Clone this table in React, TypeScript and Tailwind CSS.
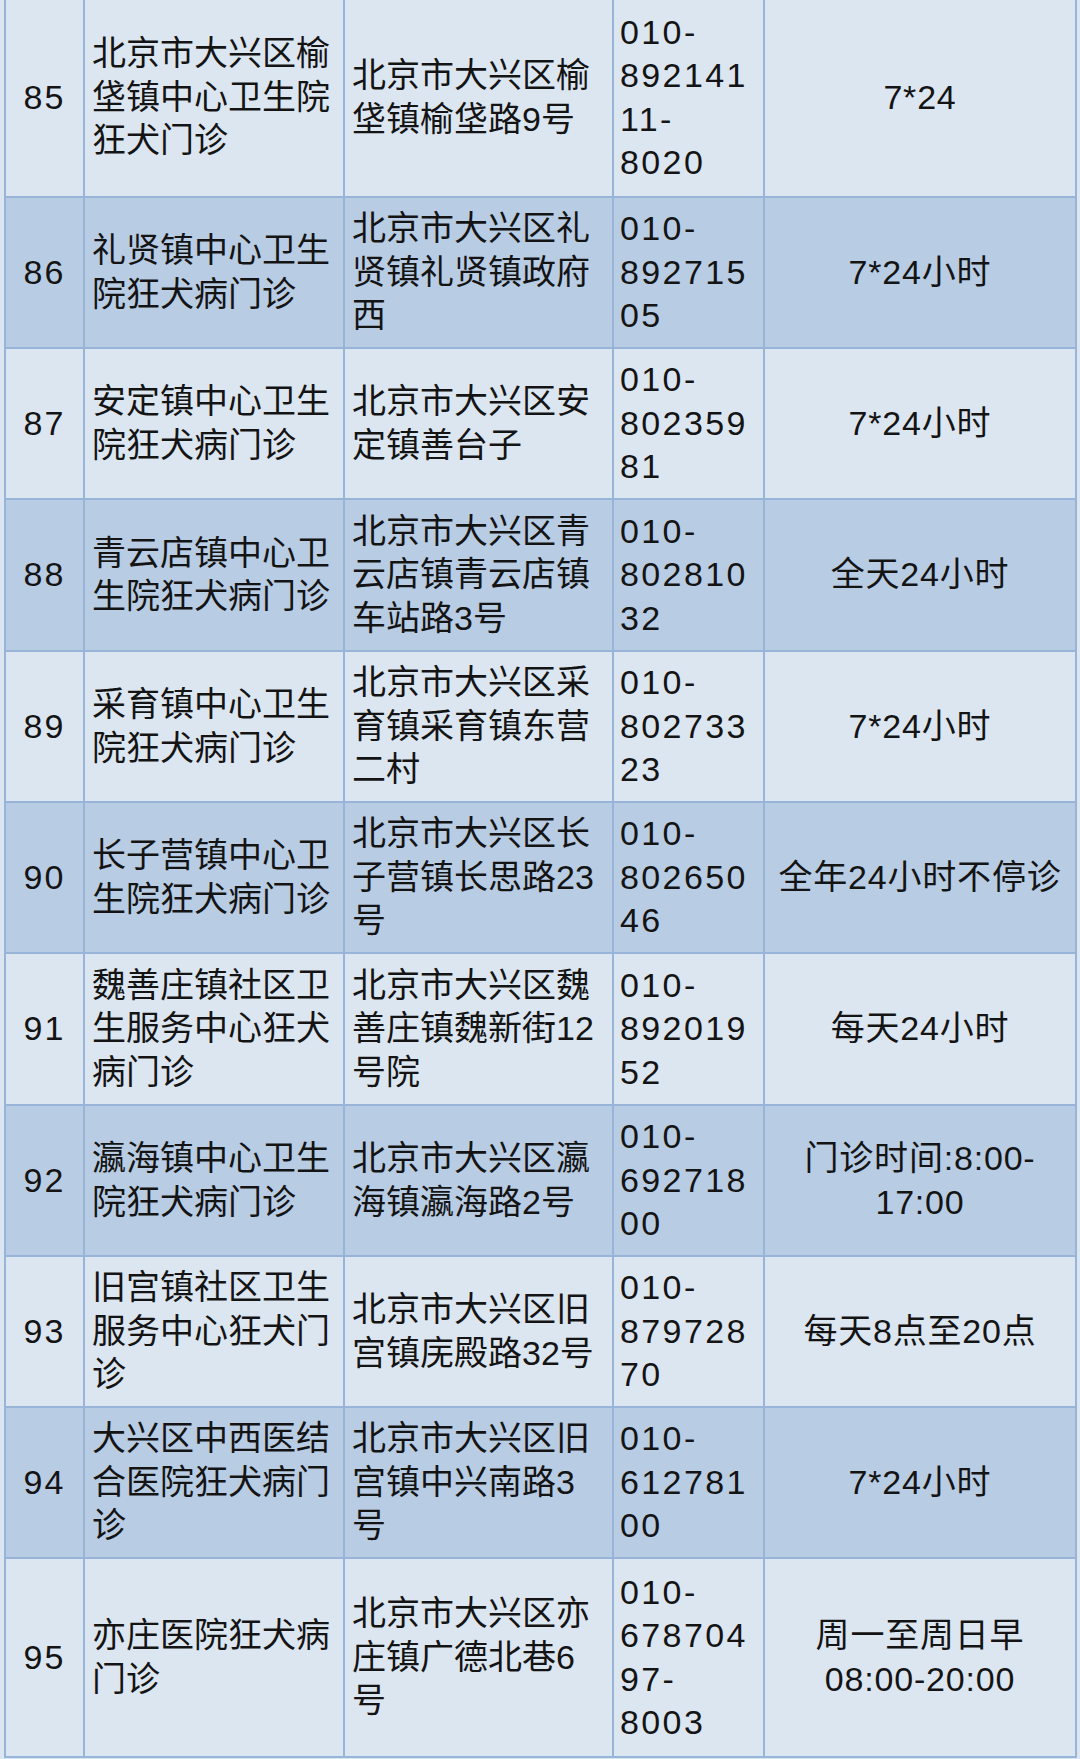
import React from 'react';

type Row = {
  no: string;
  name: string[];
  address: string[];
  phone: string[];
  hours: string[];
};

const rows: Row[] = [
  {
    no: '85',
    name: ['北京市大兴区榆', '垡镇中心卫生院', '狂犬门诊'],
    address: ['北京市大兴区榆', '垡镇榆垡路9号'],
    phone: ['010-', '892141', '11-', '8020'],
    hours: ['7*24'],
  },
  {
    no: '86',
    name: ['礼贤镇中心卫生', '院狂犬病门诊'],
    address: ['北京市大兴区礼', '贤镇礼贤镇政府', '西'],
    phone: ['010-', '892715', '05'],
    hours: ['7*24小时'],
  },
  {
    no: '87',
    name: ['安定镇中心卫生', '院狂犬病门诊'],
    address: ['北京市大兴区安', '定镇善台子'],
    phone: ['010-', '802359', '81'],
    hours: ['7*24小时'],
  },
  {
    no: '88',
    name: ['青云店镇中心卫', '生院狂犬病门诊'],
    address: ['北京市大兴区青', '云店镇青云店镇', '车站路3号'],
    phone: ['010-', '802810', '32'],
    hours: ['全天24小时'],
  },
  {
    no: '89',
    name: ['采育镇中心卫生', '院狂犬病门诊'],
    address: ['北京市大兴区采', '育镇采育镇东营', '二村'],
    phone: ['010-', '802733', '23'],
    hours: ['7*24小时'],
  },
  {
    no: '90',
    name: ['长子营镇中心卫', '生院狂犬病门诊'],
    address: ['北京市大兴区长', '子营镇长思路23', '号'],
    phone: ['010-', '802650', '46'],
    hours: ['全年24小时不停诊'],
  },
  {
    no: '91',
    name: ['魏善庄镇社区卫', '生服务中心狂犬', '病门诊'],
    address: ['北京市大兴区魏', '善庄镇魏新街12', '号院'],
    phone: ['010-', '892019', '52'],
    hours: ['每天24小时'],
  },
  {
    no: '92',
    name: ['瀛海镇中心卫生', '院狂犬病门诊'],
    address: ['北京市大兴区瀛', '海镇瀛海路2号'],
    phone: ['010-', '692718', '00'],
    hours: ['门诊时间:8:00-', '17:00'],
  },
  {
    no: '93',
    name: ['旧宫镇社区卫生', '服务中心狂犬门', '诊'],
    address: ['北京市大兴区旧', '宫镇庑殿路32号'],
    phone: ['010-', '879728', '70'],
    hours: ['每天8点至20点'],
  },
  {
    no: '94',
    name: ['大兴区中西医结', '合医院狂犬病门', '诊'],
    address: ['北京市大兴区旧', '宫镇中兴南路3', '号'],
    phone: ['010-', '612781', '00'],
    hours: ['7*24小时'],
  },
  {
    no: '95',
    name: ['亦庄医院狂犬病', '门诊'],
    address: ['北京市大兴区亦', '庄镇广德北巷6', '号'],
    phone: ['010-', '678704', '97-', '8003'],
    hours: ['周一至周日早', '08:00-20:00'],
  },
];

// row heights include the 2px bottom border
const heights = [
  'h-[199px]',
  'h-[151px]',
  'h-[151px]',
  'h-[152px]',
  'h-[151px]',
  'h-[151px]',
  'h-[152px]',
  'h-[151px]',
  'h-[151px]',
  'h-[151px]',
  'h-[199px]',
];

function Lines({ lines, className = '' }: { lines: string[]; className?: string }) {
  return (
    <div className={className}>
      {lines.map((l, i) => (
        <div key={i} className="whitespace-nowrap">
          {l}
        </div>
      ))}
    </div>
  );
}

export default function App() {
  return (
    <div className="min-h-screen bg-[#dce6f1] pl-[4px] pb-[2px] font-['Liberation_Sans','Noto_Sans_CJK_SC',sans-serif] text-[34px] leading-[43.5px] text-[#141414]">
      <div className="w-[1073px] border-l-2 border-[#98b4d8] -mt-[1px]">
        {rows.map((row, i) => {
          const bg = i % 2 === 0 ? 'bg-[#dce6f1]' : 'bg-[#b8cce4]';
          return (
            <div
              key={row.no}
              className={`grid grid-cols-[79px_260px_269px_151px_312px] border-b-2 border-[#98b4d8] ${heights[i]} ${bg}`}
            >
              <div className="flex items-center justify-center border-r-2 border-[#98b4d8] tracking-[2px]">
                {row.no}
              </div>
              <div className="flex items-center border-r-2 border-[#98b4d8] pl-[7px]">
                <Lines lines={row.name} />
              </div>
              <div className="flex items-center border-r-2 border-[#98b4d8] pl-[7px]">
                <Lines lines={row.address} />
              </div>
              <div className="flex items-center border-r-2 border-[#98b4d8] pl-[6px] tracking-[2.4px]">
                <Lines lines={row.phone} />
              </div>
              <div className="flex items-center justify-center border-r-2 border-[#98b4d8] tracking-[0.8px]">
                <Lines lines={row.hours} className="text-center" />
              </div>
            </div>
          );
        })}
      </div>
    </div>
  );
}
